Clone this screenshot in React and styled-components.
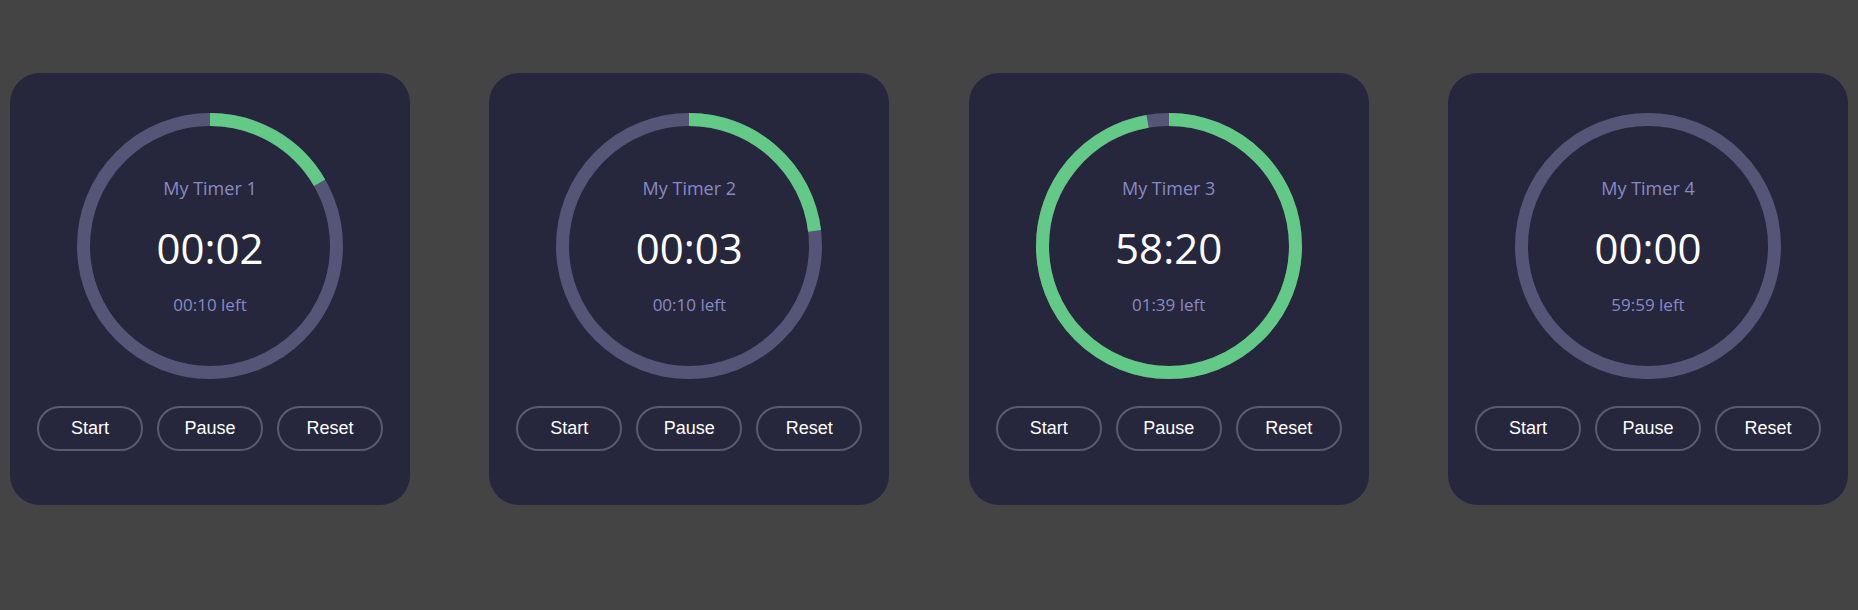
import React from "react";
import styled, { createGlobalStyle } from "styled-components";

const GlobalStyle = createGlobalStyle`
  html, body {
    margin: 0;
    padding: 0;
    background: #444444;
  }
  body {
    font-family: "Open Sans", "Noto Sans", sans-serif;
  }
`;

const Board = styled.main`
  display: flex;
  justify-content: space-between;
  align-items: flex-start;
  padding-top: 63px;
  min-height: 610px;
  box-sizing: border-box;
`;

const Card = styled.section`
  width: 400px;
  margin: 10px;
  box-sizing: border-box;
  padding: 40px 0 54px;
  background: #26263d;
  border-radius: 30px;
  display: flex;
  flex-direction: column;
  align-items: center;
  gap: 27px;
`;

const Dial = styled.div`
  display: grid;
  width: 266px;
  height: 266px;
  place-items: center;
  & > * {
    grid-area: 1 / 1;
  }
`;

const Ring = styled.svg`
  width: 266px;
  height: 266px;
  display: block;
`;

const Readout = styled.div`
  display: flex;
  flex-direction: column;
  align-items: center;
`;

const Title = styled.div`
  font-size: 18px;
  line-height: 24px;
  color: #868bc6;
`;

const Time = styled.div`
  margin-top: 21px;
  font-size: 42px;
  line-height: 54px;
  color: #ffffff;
`;

const Left = styled.div`
  margin-top: 18px;
  font-size: 17px;
  line-height: 24px;
  color: #868bc6;
`;

const Controls = styled.div`
  display: flex;
  gap: 14px;
`;

const Button = styled.button`
  width: 106px;
  height: 45px;
  box-sizing: border-box;
  border: 2px solid #5b5b70;
  border-radius: 23px;
  background: transparent;
  color: #ffffff;
  font-family: "Liberation Sans", Arial, sans-serif;
  font-size: 18px;
  cursor: pointer;
`;

const SIZE = 266;
const STROKE = 13;
const R = (SIZE - STROKE) / 2;
const C = 2 * Math.PI * R;

function ProgressRing({ fraction }) {
  return (
    <Ring viewBox={`0 0 ${SIZE} ${SIZE}`}>
      <circle
        cx={SIZE / 2}
        cy={SIZE / 2}
        r={R}
        fill="none"
        stroke="#555577"
        strokeWidth={STROKE}
      />
      {fraction > 0 && (
        <circle
          cx={SIZE / 2}
          cy={SIZE / 2}
          r={R}
          fill="none"
          stroke="#63c986"
          strokeWidth={STROKE}
          strokeDasharray={`${C * fraction} ${C}`}
          transform={`rotate(-90 ${SIZE / 2} ${SIZE / 2})`}
        />
      )}
    </Ring>
  );
}

const pad = (n) => String(n).padStart(2, "0");
const fmt = (s) => `${pad(Math.floor(s / 60))}:${pad(s % 60)}`;

const timers = [
  { name: "My Timer 1", elapsed: 2, total: 12 },
  { name: "My Timer 2", elapsed: 3, total: 13 },
  { name: "My Timer 3", elapsed: 3500, total: 3599 },
  { name: "My Timer 4", elapsed: 0, total: 3599 },
];

export default function App() {
  return (
    <>
      <GlobalStyle />
      <Board>
        {timers.map((t) => (
          <Card key={t.name}>
            <Dial>
              <ProgressRing fraction={t.elapsed / t.total} />
              <Readout>
                <Title>{t.name}</Title>
                <Time>{fmt(t.elapsed)}</Time>
                <Left>{fmt(t.total - t.elapsed)} left</Left>
              </Readout>
            </Dial>
            <Controls>
              <Button>Start</Button>
              <Button>Pause</Button>
              <Button>Reset</Button>
            </Controls>
          </Card>
        ))}
      </Board>
    </>
  );
}
